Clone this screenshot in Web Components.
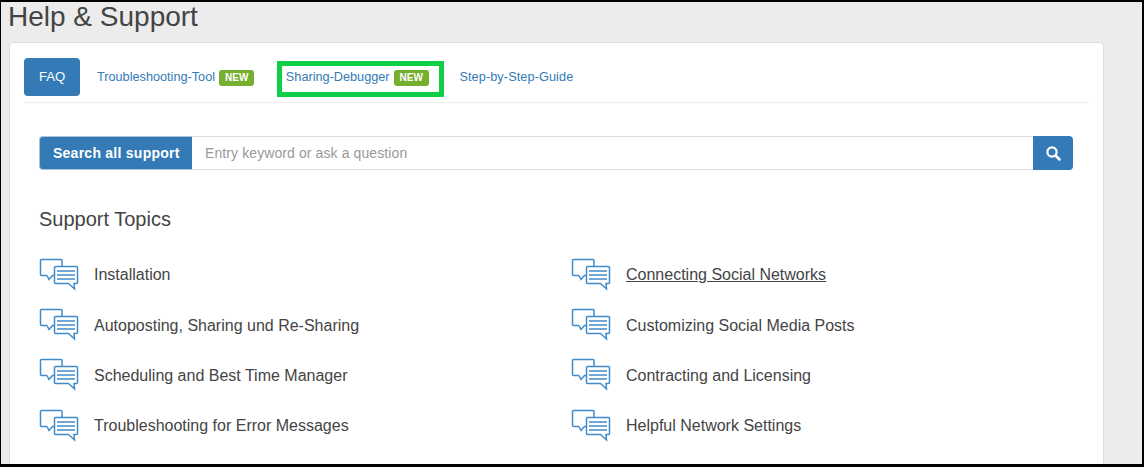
<!DOCTYPE html>
<html>
<head>
<meta charset="utf-8">
<title>Help & Support</title>
<style>
  html, body { margin: 0; height: 100%; overflow: hidden; background: #000; }
  body { font-family: "Liberation Sans", Arial, sans-serif; }
</style>
</head>
<body>
<help-page>
  <nav-tabs slot="tabs">
    <nav-tab active>FAQ</nav-tab>
    <nav-tab badge="NEW" style="margin-left:2px">Troubleshooting-Tool</nav-tab>
    <nav-tab badge="NEW" marked style="margin-left:8px">Sharing-Debugger</nav-tab>
    <nav-tab style="letter-spacing:.1px">Step-by-Step-Guide</nav-tab>
  </nav-tabs>
  <search-bar slot="search"></search-bar>
  <topic-item slot="left">Installation</topic-item>
  <topic-item slot="left">Autoposting, Sharing und Re-Sharing</topic-item>
  <topic-item slot="left">Scheduling and Best Time Manager</topic-item>
  <topic-item slot="left">Troubleshooting for Error Messages</topic-item>
  <topic-item slot="right" hover>Connecting Social Networks</topic-item>
  <topic-item slot="right">Customizing Social Media Posts</topic-item>
  <topic-item slot="right">Contracting and Licensing</topic-item>
  <topic-item slot="right">Helpful Network Settings</topic-item>
</help-page>

<script>
class HelpPage extends HTMLElement {
  constructor() {
    super();
    this.shadowDOM = this.attachShadow({mode: 'open'});
    this.shadowDOM.innerHTML = `
    <style>
      :host {
        display: block;
        box-sizing: border-box;
        width: 1144px;
        height: 467px;
        overflow: hidden;
        border-style: solid;
        border-color: #000;
        border-width: 2px 2px 3px 1px;
        background: #ececec;
        color: #333;
        padding-left: 8px;
      }
      h1 {
        margin: 0 0 0 -1px;
        height: 40px;
        font-size: 28px;
        font-weight: 400;
        line-height: 30px;
        color: #444;
      }
      .panel {
        box-sizing: border-box;
        width: 1095px;
        height: 440px;
        background: #fff;
        border: 1px solid #ddd;
        border-radius: 4px;
        padding: 15px 14px 0;
      }
      .body { padding: 33px 15px 0; }
      h2 {
        margin: 37px 0 0;
        font-size: 20px;
        font-weight: 400;
        line-height: 24px;
        color: #444;
      }
      .topics {
        display: grid;
        grid-template-columns: 532px 1fr;
        margin-top: 19.25px;
      }
    </style>
    <h1>Help &amp; Support</h1>
    <div class="panel">
      <slot name="tabs"></slot>
      <div class="body">
        <slot name="search"></slot>
        <h2>Support Topics</h2>
        <div class="topics">
          <div><slot name="left"></slot></div>
          <div><slot name="right"></slot></div>
        </div>
      </div>
    </div>
    `;
  }
}

class NavTabs extends HTMLElement {
  constructor() {
    super();
    this.shadowDOM = this.attachShadow({mode: 'open'});
    this.shadowDOM.innerHTML = `
    <style>
      :host {
        display: flex;
        align-items: flex-start;
        height: 44px;
        border-bottom: 1px solid #eee;
      }
    </style>
    <slot></slot>
    `;
  }
}

class NavTab extends HTMLElement {
  constructor() {
    super();
    this.shadowDOM = this.attachShadow({mode: 'open'});
    const badge = this.getAttribute('badge');
    this.shadowDOM.innerHTML = `
    <style>
      :host { display: block; font-size: 12.7px; line-height: 17px; }
      .tab {
        display: flex;
        align-items: center;
        height: 38px;
        box-sizing: border-box;
        padding: 0 15px;
        border-radius: 4px;
        color: #337ab7;
        white-space: nowrap;
      }
      :host([active]) .tab {
        width: 56px;
        padding-bottom: 1px;
        background: #337ab7;
        color: #fff;
        font-size: 13.2px;
      }
      :host([marked]) .tab {
        height: 36px;
        margin-top: 3px;
        padding: 0 10.5px 4px 3.5px;
        border: 5px solid #0ecf45;
        border-radius: 0;
      }
      .badge {
        margin: 2px 0 0 4px;
        padding: 0 6px;
        height: 16px;
        line-height: 16px;
        background: #76ae2e;
        border-radius: 3px;
        color: #fff;
        font-size: 10px;
        font-weight: 700;
        letter-spacing: 0;
      }
    </style>
    <div class="tab"><slot></slot>${badge ? `<span class="badge">${badge}</span>` : ''}</div>
    `;
  }
}

class SearchBar extends HTMLElement {
  constructor() {
    super();
    this.shadowDOM = this.attachShadow({mode: 'open'});
    this.shadowDOM.innerHTML = `
    <style>
      :host { display: flex; height: 34px; margin-right: 1px; font-size: 14px; }
      .label {
        display: flex;
        align-items: center;
        box-sizing: border-box;
        width: 153px;
        padding-left: 13px;
        background: #337ab7;
        color: #fff;
        font-weight: 700;
        font-size: 14px;
        letter-spacing: .25px;
        border: 1px solid #a9c3da;
        border-right: 0;
        border-radius: 4px 0 0 4px;
      }
      .field {
        flex: 1;
        display: flex;
        align-items: center;
        padding-left: 13px;
        color: #999;
        letter-spacing: .1px;
        border: 1px solid #ddd;
        border-width: 1px 0;
      }
      .go {
        display: flex;
        align-items: center;
        justify-content: center;
        width: 40px;
        background: #337ab7;
        border-radius: 0 4px 4px 0;
      }
      svg { display: block; }
    </style>
    <div class="label">Search all support</div>
    <div class="field">Entry keyword or ask a question</div>
    <div class="go">
      <svg width="15" height="15" viewBox="0 0 15 15" fill="none" stroke="#fff">
        <circle cx="6" cy="6" r="4.600" stroke-width="2.200"/>
        <path d="M9.500 9.500L13.500 13.500" stroke-width="2.500" stroke-linecap="round"/>
      </svg>
    </div>
    `;
  }
}

class TopicItem extends HTMLElement {
  constructor() {
    super();
    this.shadowDOM = this.attachShadow({mode: 'open'});
    this.shadowDOM.innerHTML = `
    <style>
      :host {
        display: flex;
        align-items: center;
        height: 50.3px;
        font-size: 16px;
        color: #444;
      }
      :host([hover]) .text { text-decoration: underline; }
      svg { display: block; flex: none; margin: 0 15px 2px 0; }
      .text { white-space: nowrap; }
    </style>
    <svg width="40" height="33" viewBox="0 0 40 33" fill="none" stroke="#428bca" stroke-width="1.500">
      <path d="M8 17.500L10 21.500L13.500 17.500H15M8 17.500H2.500A1 1 0 0 1 1.500 16.500V2.500A1 1 0 0 1 2.500 1.500H22A1 1 0 0 1 23 2.500V8"/>
      <path d="M16.500 8.500H37.500A1 1 0 0 1 38.500 9.500V24.500A1 1 0 0 1 37.500 25.500H35L35.500 31L29.500 25.500H16.500A1 1 0 0 1 15.500 24.500V9.500A1 1 0 0 1 16.500 8.500Z"/>
      <path d="M18 13H36M18 17H36M18 21H36"/>
    </svg>
    <span class="text"><slot></slot></span>
    `;
  }
}

customElements.define('help-page', HelpPage);
customElements.define('nav-tabs', NavTabs);
customElements.define('nav-tab', NavTab);
customElements.define('search-bar', SearchBar);
customElements.define('topic-item', TopicItem);
</script>
</body>
</html>
